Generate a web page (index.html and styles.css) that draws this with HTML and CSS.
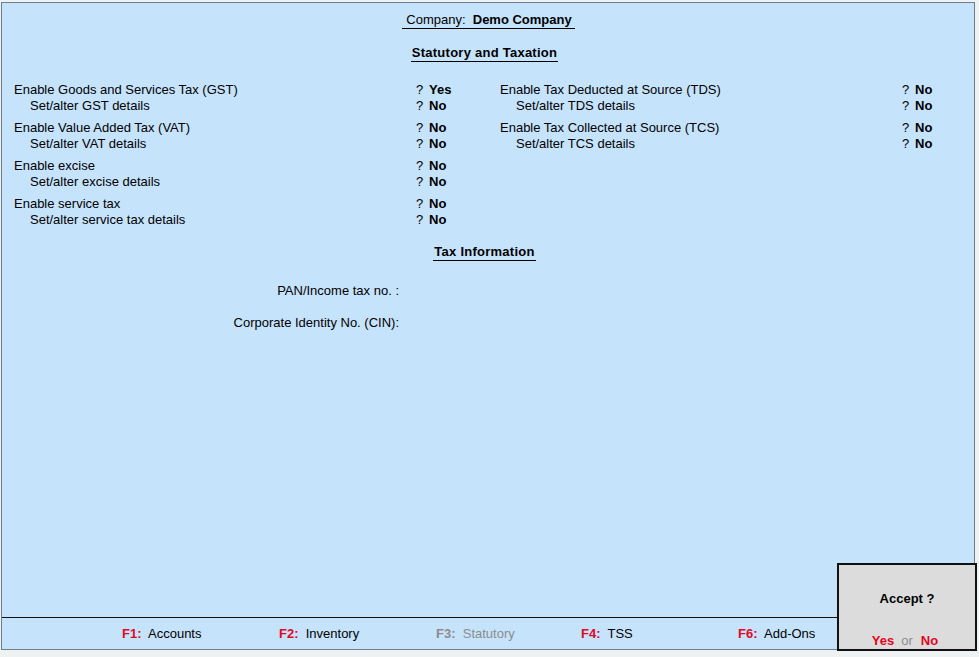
FILE: index.html
```html
<!DOCTYPE html>
<html>
<head>
<meta charset="utf-8">
<link rel="stylesheet" href="styles.css">
</head>
<body>
<div class="panel">
  <div class="main">
    <div class="center"><span class="company">Company:&nbsp; <b>Demo Company</b></span></div>
    <div class="center shifted title-gap"><span class="title">Statutory and Taxation</span></div>
    <div class="cols">
      <div class="col col-left">
        <div class="group">
          <div class="row"><span class="lbl">Enable Goods and Services Tax (GST)</span><span class="q">?</span><b>Yes</b></div>
          <div class="row sub"><span class="lbl">Set/alter GST details</span><span class="q">?</span><b>No</b></div>
        </div>
        <div class="group">
          <div class="row"><span class="lbl">Enable Value Added Tax (VAT)</span><span class="q">?</span><b>No</b></div>
          <div class="row sub"><span class="lbl">Set/alter VAT details</span><span class="q">?</span><b>No</b></div>
        </div>
        <div class="group">
          <div class="row"><span class="lbl">Enable excise</span><span class="q">?</span><b>No</b></div>
          <div class="row sub"><span class="lbl">Set/alter excise details</span><span class="q">?</span><b>No</b></div>
        </div>
        <div class="group">
          <div class="row"><span class="lbl">Enable service tax</span><span class="q">?</span><b>No</b></div>
          <div class="row sub"><span class="lbl">Set/alter service tax details</span><span class="q">?</span><b>No</b></div>
        </div>
      </div>
      <div class="col col-right">
        <div class="group">
          <div class="row"><span class="lbl">Enable Tax Deducted at Source (TDS)</span><span class="q">?</span><b>No</b></div>
          <div class="row sub"><span class="lbl">Set/alter TDS details</span><span class="q">?</span><b>No</b></div>
        </div>
        <div class="group">
          <div class="row"><span class="lbl">Enable Tax Collected at Source (TCS)</span><span class="q">?</span><b>No</b></div>
          <div class="row sub"><span class="lbl">Set/alter TCS details</span><span class="q">?</span><b>No</b></div>
        </div>
      </div>
    </div>
    <div class="center shifted taxinfo-gap"><span class="title">Tax Information</span></div>
    <div class="info">
      <div class="info-row"><span class="info-lbl">PAN/Income tax no. :</span></div>
      <div class="info-row"><span class="info-lbl">Corporate Identity No. (CIN):</span></div>
    </div>
  </div>
  <div class="footer">
    <span class="fk w1"><b class="key">F1:</b>&nbsp; Accounts</span>
    <span class="fk w1"><b class="key">F2:</b>&nbsp; Inventory</span>
    <span class="fk w2 dim"><b class="key">F3:</b>&nbsp; Statutory</span>
    <span class="fk w1"><b class="key">F4:</b>&nbsp; TSS</span>
    <span class="fk"><b class="key">F6:</b>&nbsp; Add-Ons</span>
  </div>
</div>
<div class="accept">
  <div class="accept-title">Accept ?</div>
  <div class="accept-opts"><b class="red">Yes</b><span class="or">or</span><b class="red">No</b></div>
</div>
</body>
</html>
```

FILE: styles.css
```css
html, body {
  margin: 0;
  padding: 0;
}
body {
  background: #eef2f2;
  font-family: "Liberation Sans", Arial, sans-serif;
  font-size: 13px;
  line-height: 16px;
  color: #000;
  width: 979px;
  height: 657px;
  overflow: hidden;
  position: relative;
}
.panel {
  box-sizing: border-box;
  margin: 2px 0 0 1px;
  width: 974px;
  height: 648px;
  border: 1px solid #6f7d8c;
  background: #c6e3fc;
  display: flex;
  flex-direction: column;
}
.main {
  flex: 1;
  border-bottom: 1px solid #111;
  padding-top: 9px;
}
.center {
  display: flex;
  justify-content: center;
  padding-left: 1px;
}
.center.shifted {
  padding-left: 0;
  padding-right: 7px;
}
.company {
  border-bottom: 1px solid #000;
  padding: 0 3px 0 4px;
}
.title-gap { margin-top: 16px; }
.title {
  font-weight: bold;
  border-bottom: 1px solid #000;
  padding: 0 1px;
  letter-spacing: 0.25px;
}
.cols {
  display: flex;
  margin-top: 20px;
  padding-left: 12px;
}
.col {
  display: flex;
  flex-direction: column;
  gap: 6px;
}
.col-left {
  width: 486px;
  flex: none;
}
.col-right {
  flex: 1;
}
.row {
  display: flex;
  height: 16px;
}
.lbl {
  width: 402px;
  flex: none;
}
.sub .lbl {
  padding-left: 16px;
  width: 386px;
}
.q {
  width: 13px;
  flex: none;
}
.taxinfo-gap { margin-top: 16px; }
.info {
  margin-top: 22px;
  display: flex;
  flex-direction: column;
  gap: 16px;
}
.info-row {
  width: 397px;
  text-align: right;
}
.footer {
  height: 31px;
  display: flex;
  align-items: center;
  padding-left: 120px;
  box-sizing: border-box;
}
.fk { flex: none; }
.w1 { width: 157px; }
.w2 { width: 145px; }
.key { color: #e2061f; }
.dim { color: #8c8c8c; }
.dim .key { color: #8c8c8c; }
.accept {
  position: absolute;
  left: 837px;
  top: 563px;
  box-sizing: border-box;
  width: 140px;
  height: 88px;
  border: 2px solid #111;
  background: #dcdcdc;
  display: flex;
  flex-direction: column;
  align-items: center;
  padding-top: 26px;
}
.accept-title {
  font-weight: bold;
}
.accept-opts {
  margin-top: 26px;
  padding-right: 4px;
}
.red { color: #e2061f; }
.or { color: #8c8c8c; padding: 0 8px 0 7px; }
```
